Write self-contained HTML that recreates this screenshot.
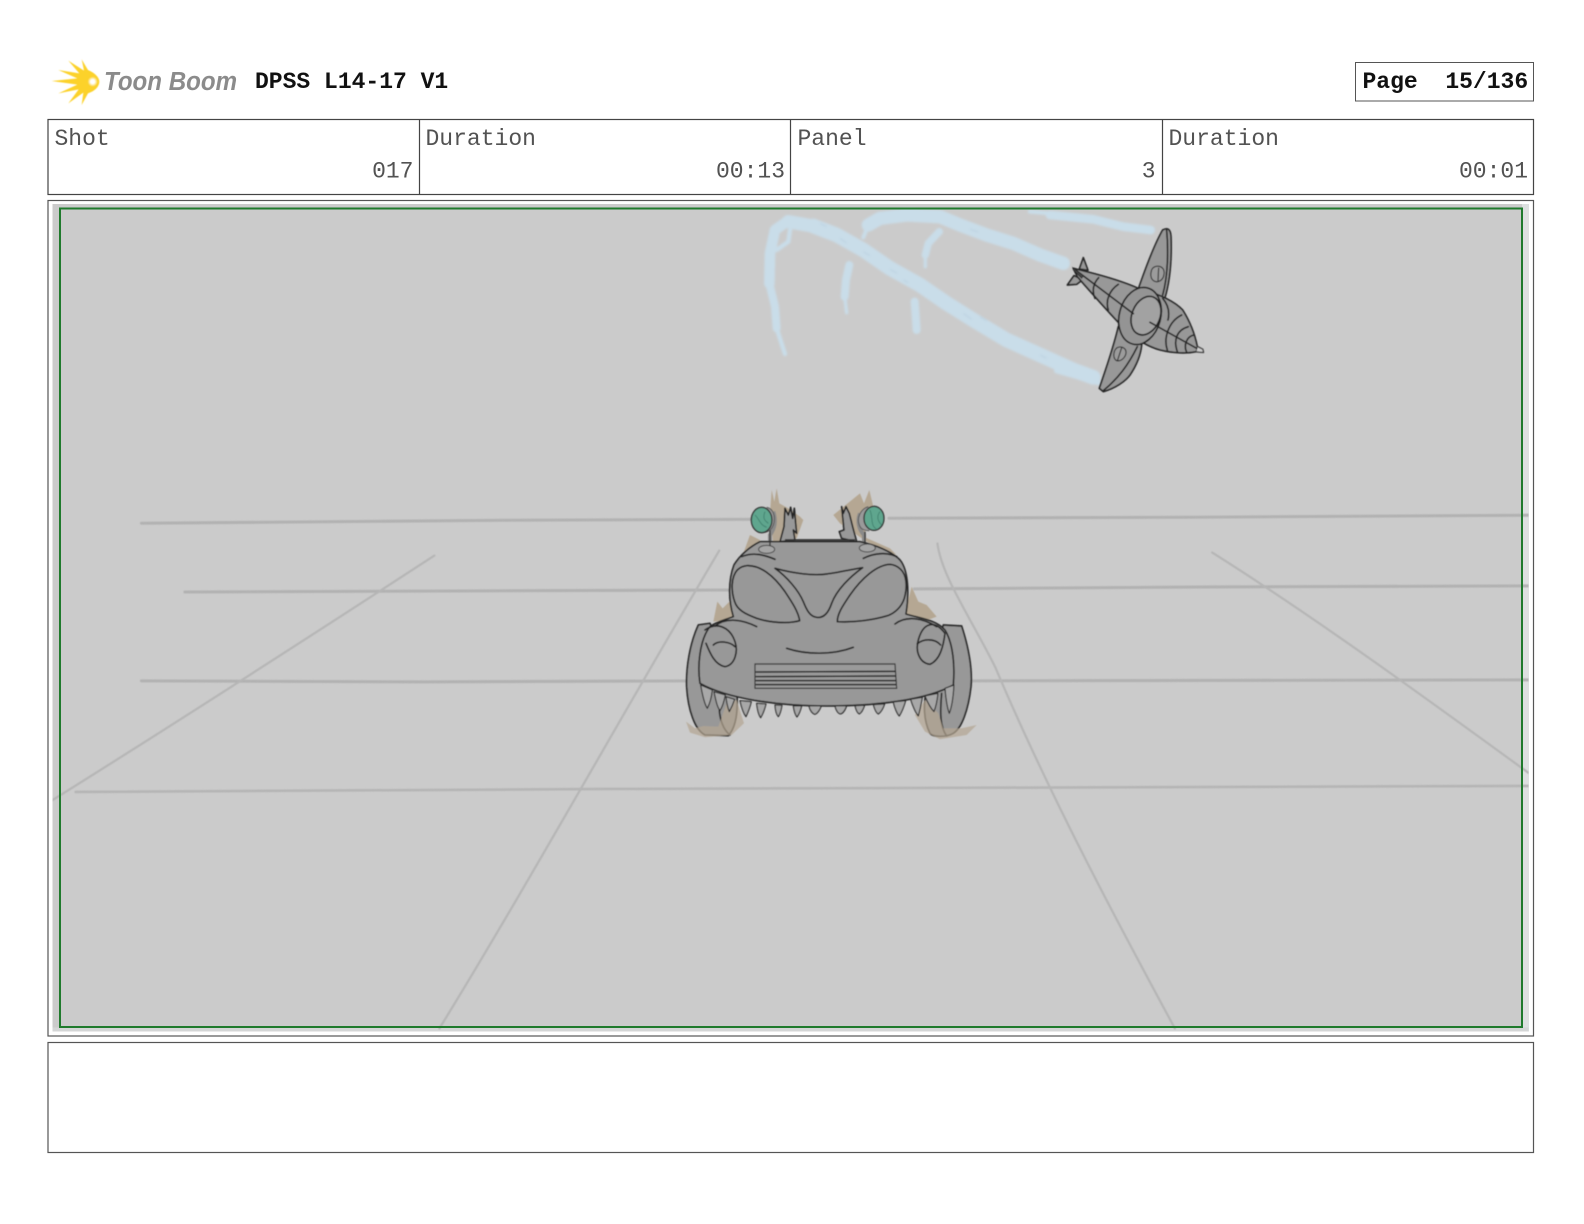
<!DOCTYPE html>
<html lang="en">
<head>
<meta charset="utf-8">
<title>DPSS L14-17 V1</title>
<style>
html,body{margin:0;padding:0;background:#fff;width:1584px;height:1224px;overflow:hidden}
svg{display:block;position:absolute;left:0;top:0}
.t{font-family:"Liberation Mono",monospace;font-size:23px;fill:#525252}
.b{font-family:"Liberation Mono",monospace;font-size:23px;font-weight:bold;fill:#111}
.o{stroke:#262626;stroke-width:5;fill:none;stroke-linecap:round;stroke-linejoin:round}
.f{fill:#989898;stroke:#262626;stroke-width:5;stroke-linejoin:round}
.s{fill:none;stroke:#c9dde9;stroke-linecap:round;stroke-linejoin:round}
</style>
</head>
<body>
<svg width="1584" height="1224" viewBox="0 0 1584 1224" xmlns="http://www.w3.org/2000/svg">
<defs>
<clipPath id="g"><rect x="52.5" y="204" width="1476" height="827"/></clipPath>
<radialGradient id="w" cx="0.5" cy="0.5" r="0.5"><stop offset="0.4" stop-color="#fff"/><stop offset="1" stop-color="#fff" stop-opacity="0"/></radialGradient>
<filter id="b1" x="-5%" y="-5%" width="110%" height="110%"><feGaussianBlur stdDeviation="1.3"/></filter>
<filter id="b2" x="-5%" y="-5%" width="110%" height="110%"><feGaussianBlur stdDeviation="3"/></filter>
<filter id="b3" x="-5%" y="-5%" width="110%" height="110%"><feGaussianBlur stdDeviation="0.5"/></filter>
</defs>
<rect width="1584" height="1224" fill="#fff"/>

<!-- logo -->
<g transform="translate(44,50) scale(.3333)" fill="#fcd22a" filter="url(#b1)">
<path d="M23,93 L100,85 L43,60 L106,70 L73,32 L120,62 L113,28 L132,60 C152,68 166,82 166,95 C166,110 152,124 132,130 L113,165 L118,128 L73,160 L104,118 L43,130 L100,104 Z"/>
<circle cx="146" cy="95" r="15" fill="url(#w)"/>
</g>
<text x="104" y="90" font-family="Liberation Sans,sans-serif" font-size="25.5" font-style="italic" font-weight="bold" fill="#8b8b8b" textLength="133" lengthAdjust="spacingAndGlyphs">Toon Boom</text>
<text x="255" y="88" class="b">DPSS L14-17 V1</text>

<!-- page box -->
<rect x="1355.5" y="62.5" width="178" height="38.5" fill="#fff" stroke="#555" stroke-width="1"/>
<text x="1362.5" y="88" class="b" xml:space="preserve">Page  15/136</text>

<!-- header table -->
<rect x="48" y="119.5" width="1485.5" height="75" fill="#fff" stroke="#444" stroke-width="1.2"/>
<path d="M419.5,119.5V194.5M790.5,119.5V194.5M1162.5,119.5V194.5" stroke="#444" stroke-width="1.2"/>
<text x="54.5" y="145" class="t">Shot</text>
<text x="425.5" y="145" class="t">Duration</text>
<text x="797.5" y="145" class="t">Panel</text>
<text x="1168.5" y="145" class="t">Duration</text>
<text x="413.5" y="177.5" class="t" text-anchor="end">017</text>
<text x="785" y="177.5" class="t" text-anchor="end">00:13</text>
<text x="1155.5" y="177.5" class="t" text-anchor="end">3</text>
<text x="1528" y="177.5" class="t" text-anchor="end">00:01</text>

<!-- panel frame -->
<rect x="48" y="200.5" width="1485.5" height="835.5" fill="#fff" stroke="#555" stroke-width="1.2"/>
<rect x="52.5" y="204" width="1476" height="827.5" fill="#cbcbcb"/>
<rect x="1522" y="204" width="7" height="827.5" fill="#dde0e0"/>
<rect x="52.5" y="1027.5" width="1476" height="4" fill="#d4d6d6"/>

<!-- ground lines -->
<g clip-path="url(#g)">
<g transform="scale(1.0102)" fill="none" stroke-linecap="round" filter="url(#b3)">
<g stroke="#b2b2b2" stroke-width="3">
<path d="M140,518 L500,515 L760,514 M880,513 L1180,512 L1513,510"/>
<path d="M183,586 L450,585 L725,584 M905,583 L1200,581 L1513,580"/>
<path d="M140,674 L420,675 L682,674 M960,674 L1513,673"/>
</g>
<path d="M75,784 L600,781 L1513,778" stroke="#b5b5b5" stroke-width="2.6"/>
<g stroke="#b6b6b6" stroke-width="2.2">
<path d="M52,792 C180,712 310,628 430,550"/>
<path d="M435,1018 C520,880 620,700 712,545"/>
<path d="M928,538 C932,570 960,610 985,660 C1040,790 1110,920 1163,1018"/>
<path d="M1200,547 C1300,610 1410,690 1513,765"/>
</g>
</g>
</g>

<!-- contrails -->
<g transform="translate(740,200) scale(.3333)" filter="url(#b2)">
<path class="s" stroke-width="44" d="M1060,532 L1000,510 L900,465 L800,420 L700,360 L620,310 L540,255 L450,205 L370,150 L290,105 L220,78"/>
<path class="s" stroke-width="16" d="M950,512 L1075,548"/>
<path class="s" stroke-width="40" d="M230,80 L145,65"/>
<path class="s" stroke-width="32" d="M145,62 L105,90 L90,160 L88,250"/>
<path class="s" stroke-width="24" d="M88,250 L105,320 L110,385"/>
<path class="s" stroke-width="13" d="M110,385 L135,462"/>
<path class="s" stroke-width="13" d="M110,150 L145,125 L150,90"/>
<path class="s" stroke-width="26" d="M1232,90 L1150,80 L1060,58 L930,45"/>
<path class="s" stroke-width="12" d="M930,40 L870,35"/>
<path class="s" stroke-width="40" d="M970,190 L900,165 L820,130 L740,105 L660,75 L600,50 L500,45 L420,55 L385,75"/>
<path class="s" stroke-width="12" d="M385,75 L370,112"/>
<path class="s" stroke-width="22" d="M598,95 L565,130 L556,165"/>
<path class="s" stroke-width="10" d="M556,165 L556,200"/>
<path class="s" stroke-width="24" d="M328,195 L318,240 L314,290"/>
<path class="s" stroke-width="10" d="M314,290 L320,338"/>
<path class="s" stroke-width="24" d="M524,305 L527,345 L530,390"/>
<path d="M240,70l20,10M300,115l20,14M370,155l20,12M450,208l22,12M490,240l15,8M670,340l25,18M720,350l20,12M900,465l20,10M690,88l25,8" stroke="#b9d0df" stroke-width="3" fill="none"/>
</g>

<!-- green safe frame -->
<rect x="60" y="208.5" width="1462" height="818.5" fill="none" stroke="#1f7a2c" stroke-width="2"/>

<!-- plane -->
<g transform="translate(1040,215) scale(.3333)" filter="url(#b1)">
<path class="f" d="M295,222 C320,150 345,85 368,45 C385,36 392,45 393,65 C395,120 392,190 375,248 Z"/>
<path class="f" d="M235,335 C220,400 195,470 178,520 L190,530 C225,520 255,500 270,480 C290,450 302,420 305,390 Z"/>
<path class="o" d="M380,45 C385,100 385,180 368,240M190,527 C235,490 265,450 292,395"/>
<path d="M345,155 C362,150 375,160 372,178 C370,195 355,205 342,198 C328,190 330,160 345,155Z M356,158 L354,198" fill="#9c9c9c" stroke="#333" stroke-width="3.5"/>
<path d="M232,398 C245,392 260,400 258,415 C255,430 240,442 228,436 C218,428 220,405 232,398Z M245,398 L232,438" fill="#9c9c9c" stroke="#333" stroke-width="3.5"/>
<path class="f" stroke-width="3.5" d="M118,162 L130,128 L144,166 Z"/>
<path class="f" stroke-width="3.5" d="M102,182 L82,210 L110,208 L128,194 Z"/>
<path class="f" d="M100,160 L140,170 C200,185 250,200 295,220 C350,235 400,255 428,285 C450,320 465,360 472,395 L488,403 L490,412 L468,410 C440,416 400,415 360,405 C315,392 275,365 235,322 C205,290 160,240 112,185 Z"/>
<path d="M472,395 L488,403 L490,412 L468,410 Z" fill="#cfcfcf" stroke="#444" stroke-width="3"/>
<ellipse cx="300" cy="303" rx="62" ry="87" transform="rotate(15 300 303)" fill="#949494" stroke="#222" stroke-width="5"/>
<ellipse cx="318" cy="302" rx="42" ry="60" transform="rotate(22 318 302)" fill="#a2a2a2" stroke="#222" stroke-width="5"/>
<path class="o" d="M100,160 L230,258 L280,296 M330,322 L470,400"/>
<path class="o" d="M176,188 C160,205 155,228 165,250M235,208 C210,225 195,255 205,285M382,405 C370,370 385,320 425,300M412,410 C400,375 410,345 445,335M440,412 C430,390 440,365 462,360M368,250 C385,270 390,290 384,315"/>
<path d="M98,158 L130,182 L125,190 L100,165 Z" fill="#444" stroke="#222" stroke-width="2"/>
</g>

<!-- car -->
<g transform="translate(660,470) scale(.3333)" filter="url(#b1)">
<!-- flames -->
<g fill="#b5a793">
<path d="M335,60 L343,95 L350,55 L358,100 L385,115 L420,140 L430,150 L410,205 L340,225 L330,130 Z"/>
<path d="M600,70 L612,100 L628,60 L640,110 L610,200 L690,235 L710,255 L620,215 L540,160 L520,135 Z"/>
<path d="M248,255 L270,195 L300,210 L300,235 Z"/>
<path d="M160,455 L172,395 L188,415 L218,385 L225,450 Z"/>
<path d="M735,430 L755,350 L775,395 L800,405 L830,440 L790,455 Z"/>
</g>
<!-- wheels -->
<path class="f" d="M115,465 C90,520 78,590 80,650 C84,720 105,780 135,795 L205,797 C230,770 235,720 230,660 L150,460 Z"/>
<path class="f" d="M850,465 L905,468 C925,530 938,590 933,650 C925,720 905,775 880,790 C860,802 820,802 810,790 C790,750 790,700 800,660 Z"/>
<path class="o" d="M178,720 C180,750 190,780 210,795M845,670 C840,730 840,770 860,798"/>
<!-- flames over tyres -->
<g fill="#b5a793" opacity=".72">
<path d="M78,755 L105,775 L130,768 L175,770 L200,700 L230,690 L252,760 L215,795 L135,802 L90,788 Z"/>
<path d="M765,735 L795,690 L835,730 L850,775 L905,775 L950,765 L920,795 L840,808 L795,785 Z"/>
</g>
<!-- brackets / horns -->
<path class="f" stroke-width="3" d="M375,115 L385,135 L392,112 L398,145 L403,115 L410,190 L400,180 L405,210 L360,215 L372,170 Z"/>
<path class="f" stroke-width="3" d="M545,110 L550,130 L558,110 L568,130 L578,170 L590,215 L545,205 L538,185 L552,180 Z"/>
<path d="M340,125 C348,150 345,175 330,195 L330,225" fill="none" stroke="#8a8a8a" stroke-width="12"/>
<path d="M600,130 C590,155 598,180 612,195 L612,225" fill="none" stroke="#8a8a8a" stroke-width="12"/>
<!-- body -->
<path class="f" d="M300,215 L600,215 C650,225 695,245 720,270 C745,300 748,370 738,432 C780,445 830,450 855,480 C880,520 885,590 880,645 C800,690 650,708 500,708 C350,708 200,685 120,640 C112,590 118,510 150,470 C170,455 195,450 220,440 C205,390 205,330 222,285 C240,255 270,230 300,215 Z"/>
<path d="M375,210 L585,210" stroke="#333" stroke-width="5"/>
<!-- teeth -->
<g fill="#a8a8a8" stroke="#2b2b2b" stroke-width="3.5" stroke-linejoin="round">
<path d="M122,645 C128,680 135,705 142,715 C150,700 155,680 157,660Z"/>
<path d="M162,665 C168,695 172,712 180,722 C188,710 192,695 196,675Z"/>
<path d="M198,680 C200,700 204,715 208,725 C215,712 220,700 224,688Z"/>
<path d="M240,692 C245,715 250,730 258,740 C265,725 270,712 274,695Z"/>
<path d="M290,700 C292,720 296,735 302,743 C310,730 314,718 318,702Z"/>
<path d="M345,705 C346,720 350,735 355,740 C362,730 364,718 366,706Z"/>
<path d="M400,708 C402,722 406,735 411,741 C418,732 422,720 425,708Z"/>
<path d="M447,708 C450,722 458,732 465,733 C474,730 480,718 484,708Z"/>
<path d="M525,708 C528,722 535,732 542,732 C551,730 556,718 560,708Z"/>
<path d="M585,707 C588,720 593,730 598,732 C605,728 610,718 614,706Z"/>
<path d="M640,704 C644,718 650,730 655,732 C664,726 670,714 674,702Z"/>
<path d="M700,696 C704,715 712,732 718,738 C726,725 732,710 737,692Z"/>
<path d="M752,688 C758,708 768,730 775,738 C780,720 784,700 787,682Z"/>
<path d="M795,678 C804,700 815,718 822,725 C828,710 832,690 834,670Z"/>
<path d="M855,655 C858,690 862,715 868,730 C876,710 880,680 882,645Z"/>
</g>
<!-- hood details -->
<path class="f" fill="#939393" d="M260,287 C300,285 340,315 375,365 C395,395 415,425 419,452 C385,462 330,458 290,445 C255,432 232,420 224,395 C212,360 214,320 232,300 C240,292 250,288 260,287 Z"/>
<path class="f" fill="#939393" d="M690,283 C650,285 605,325 570,375 C550,405 532,430 532,455 C580,458 640,450 680,438 C705,430 725,410 733,385 C743,350 740,315 722,298 C712,288 700,284 690,283 Z"/>
<path class="f" d="M345,295 C400,310 460,318 500,312 C535,308 575,298 608,293 C570,320 530,360 515,400 C505,430 490,445 470,442 C450,440 440,420 430,395 C415,360 380,320 345,295 Z"/>
<path class="o" d="M245,260 C280,245 315,255 345,268M610,265 C640,250 680,245 710,260M165,468 C200,440 250,450 290,470M705,462 C740,435 790,445 830,470M380,535 C440,555 520,555 580,532"/>
<!-- fender lamps -->
<path class="o" d="M135,480 C170,455 210,470 225,515 C235,545 225,585 195,590 C165,585 150,550 138,520"/>
<path class="o" d="M160,525 C175,510 210,515 225,530"/>
<path class="o" d="M855,490 C825,450 790,455 775,510 C765,545 780,580 810,583 C840,570 850,530 855,490Z"/>
<path class="o" d="M772,522 C790,505 825,505 842,525"/>
<!-- grille -->
<path d="M285,582 L705,582 L710,655 L285,655 Z" fill="#9a9a9a" stroke="#333" stroke-width="3.5"/>
<path d="M287,606 L708,604M287,620 L708,618M287,632 L708,632M287,644 L708,644" stroke="#222" stroke-width="4.5"/>
<!-- lamps mounts -->
<ellipse cx="320" cy="238" rx="24" ry="12" fill="#a5a5a5" stroke="#444" stroke-width="3"/>
<ellipse cx="622" cy="234" rx="24" ry="12" fill="#a5a5a5" stroke="#444" stroke-width="3"/>
<path d="M330,180 L330,228M615,185 L615,222" stroke="#333" stroke-width="4"/>
<!-- head lights -->
<path d="M320,112 C340,115 348,140 340,165 C335,180 325,185 315,187" fill="#9a9a9a" stroke="#555" stroke-width="3"/>
<path d="M625,110 C600,118 590,145 598,165 C602,178 615,182 628,182" fill="#9a9a9a" stroke="#555" stroke-width="3"/>
<ellipse cx="305" cy="150" rx="31" ry="38" fill="#5fa68e" stroke="#333" stroke-width="4"/>
<path d="M285,135 C300,150 300,165 320,172M315,125 C305,150 320,155 325,160" stroke="#3f7e6c" stroke-width="2.5" fill="none"/>
<ellipse cx="642" cy="145" rx="30" ry="36" fill="#5fa68e" stroke="#333" stroke-width="4"/>
<path d="M630,120 C640,145 630,165 650,178M660,125 C645,145 660,160 665,165" stroke="#3f7e6c" stroke-width="2.5" fill="none"/>
</g>

<!-- notes box -->
<rect x="48" y="1042.5" width="1485.5" height="110" fill="#fff" stroke="#555" stroke-width="1.2"/>
</svg>
</body>
</html>
